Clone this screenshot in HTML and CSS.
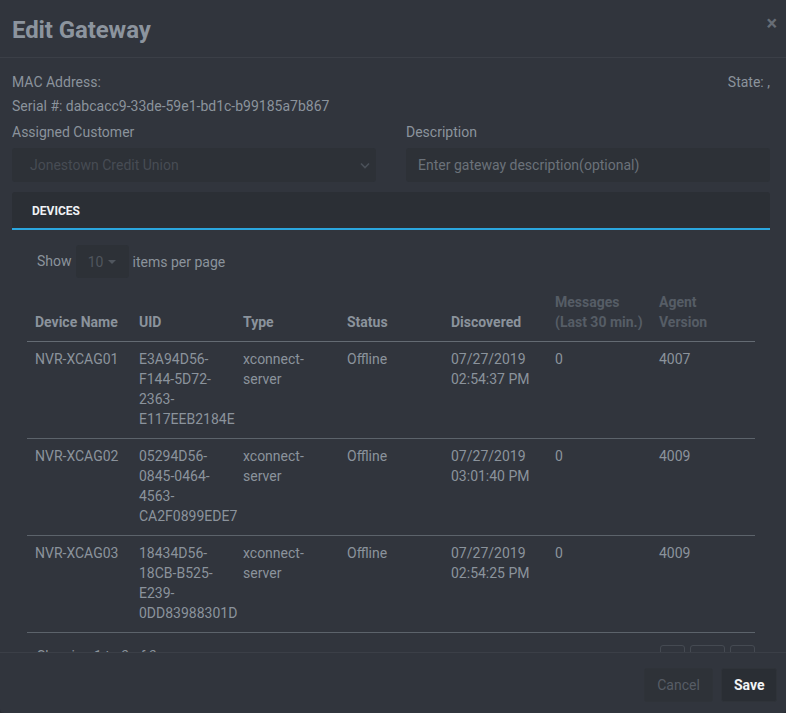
FILE: index.html
```html
<!DOCTYPE html>
<html>
<head>
<meta charset="utf-8">
<title>Edit Gateway</title>
<link rel="stylesheet" href="styles.css">
</head>
<body>
<div class="modal">
  <div class="modal-header">
    <h1 class="modal-title">Edit Gateway</h1>
    <span class="close">&times;</span>
  </div>
  <div class="modal-body">
    <div class="info-row">
      <span>MAC Address:</span>
      <span>State: ,</span>
    </div>
    <div class="info-line">Serial #: dabcacc9-33de-59e1-bd1c-b99185a7b867</div>
    <div class="fields">
      <div class="field">
        <label class="label">Assigned Customer</label>
        <div class="select disabled">
          <span>Jonestown Credit Union</span>
          <svg class="chev" width="10" height="7" viewBox="0 0 10 7"><path d="M1 1.5 L5 5.5 L9 1.5" fill="none" stroke="#4a5058" stroke-width="1.6"/></svg>
        </div>
      </div>
      <div class="field">
        <label class="label">Description</label>
        <div class="input"><span class="placeholder">Enter gateway description(optional)</span></div>
      </div>
    </div>
    <div class="tabs">
      <div class="tab active">DEVICES</div>
    </div>
    <div class="grid">
      <div class="pager-top">
        <span>Show</span>
        <div class="page-size"><span>10</span><span class="caret"></span></div>
        <span>items per page</span>
      </div>
      <table class="devices">
        <thead>
          <tr>
            <th>Device Name</th>
            <th>UID</th>
            <th>Type</th>
            <th>Status</th>
            <th>Discovered</th>
            <th class="dim">Messages (Last 30 min.)</th>
            <th class="dim">Agent Version</th>
          </tr>
        </thead>
        <tbody>
          <tr>
            <td>NVR-XCAG01</td>
            <td>E3A94D56-<br>F144-5D72-<br>2363-<br>E117EEB2184E</td>
            <td>xconnect-<br>server</td>
            <td>Offline</td>
            <td>07/27/2019<br>02:54:37 PM</td>
            <td>0</td>
            <td>4007</td>
          </tr>
          <tr>
            <td>NVR-XCAG02</td>
            <td>05294D56-<br>0845-0464-<br>4563-<br>CA2F0899EDE7</td>
            <td>xconnect-<br>server</td>
            <td>Offline</td>
            <td>07/27/2019<br>03:01:40 PM</td>
            <td>0</td>
            <td>4009</td>
          </tr>
          <tr>
            <td>NVR-XCAG03</td>
            <td>18434D56-<br>18CB-B525-<br>E239-<br>0DD83988301D</td>
            <td>xconnect-<br>server</td>
            <td>Offline</td>
            <td>07/27/2019<br>02:54:25 PM</td>
            <td>0</td>
            <td>4009</td>
          </tr>
        </tbody>
      </table>
      <div class="pager-bottom">
        <span class="showing">Showing 1 to 3 of 3</span>
        <div class="pages">
          <span class="pbtn">&lsaquo;</span>
          <span class="pbtn wide">1</span>
          <span class="pbtn">&rsaquo;</span>
        </div>
      </div>
    </div>
  </div>
  <div class="modal-footer">
    <button class="btn cancel">Cancel</button>
    <button class="btn save">Save</button>
  </div>
</div>
</body>
</html>
```
FILE: styles.css
```css
* { box-sizing: border-box; }
html, body {
  margin: 0;
  padding: 0;
  height: 100%;
  background: #2a2d33;
}
body {
  font-family: Roboto, "Liberation Sans", sans-serif;
  font-size: 14px;
  color: #8b939c;
}
.modal {
  width: 786px;
  height: 713px;
  background: #31353d;
  display: flex;
  flex-direction: column;
  border-radius: 0 0 4px 4px;
  overflow: hidden;
}
.modal-header {
  height: 58px;
  flex: none;
  border-bottom: 1px solid #3b3f47;
  display: flex;
  align-items: center;
  justify-content: space-between;
  padding: 0 9px 0 12px;
  position: relative;
}
.modal-title {
  margin: 0;
  font-size: 24px;
  font-weight: 700;
  color: #8c949e;
  letter-spacing: -0.1px;
  margin-top: 3px;
}
.close {
  font-size: 20px;
  font-weight: 700;
  color: #676d76;
  align-self: flex-start;
  margin-top: 11px;
  line-height: 24px;
}
.modal-body {
  flex: 1;
  overflow-y: auto;
  padding: 12px 14px 12px 12px;
  border-right: 2px solid transparent;
}
.modal-body::-webkit-scrollbar { width: 2px; }
.modal-body::-webkit-scrollbar-track { background: transparent; }
.modal-body::-webkit-scrollbar-thumb { background: #a3a8ae; }
.info-row {
  display: flex;
  justify-content: space-between;
  line-height: 24px;
}
.info-line { line-height: 24px; }
.fields {
  display: grid;
  grid-template-columns: 364px 364px;
  column-gap: 30px;
  margin-top: 4px;
}
.label {
  display: block;
  line-height: 20px;
  margin-bottom: 6px;
}
.select, .input {
  height: 34px;
  background: #2d3137;
  border-radius: 3px;
  display: flex;
  align-items: center;
  padding: 0 12px;
}
.select { padding-left: 18px; justify-content: space-between; padding-right: 6px; }
.select.disabled span { color: #474c54; }
.placeholder { color: #6b727a; }
.tabs {
  margin-top: 10px;
  background: #2b2f35;
  border-bottom: 2px solid #2ba6de;
  height: 38px;
  border-radius: 3px 3px 0 0;
  display: flex;
  align-items: center;
}
.tab {
  padding-left: 20px;
  font-size: 12px;
  font-weight: 700;
  color: #f0f2f4;
  margin-top: 1px;
}
.grid {
  padding: 15px 15px 0 15px;
}
.pager-top {
  display: flex;
  align-items: center;
  gap: 4px;
  padding-left: 10px;
  height: 33px;
  line-height: 20px;
}
.pager-top > span:first-child { margin-top: -1px; }
.page-size {
  height: 33px;
  width: 53px;
  background: #2d3137;
  border-radius: 3px;
  display: flex;
  align-items: center;
  justify-content: center;
  gap: 5px;
  color: #50565e;
}
.caret {
  width: 0;
  height: 0;
  border-left: 4px solid transparent;
  border-right: 4px solid transparent;
  border-top: 4px solid #50565e;
}
.devices {
  width: 728px;
  border-collapse: collapse;
  table-layout: fixed;
  margin-top: 6px;
}
.devices th, .devices td {
  width: 104px;
  text-align: left;
  vertical-align: top;
  padding: 8px 8px;
  line-height: 20px;
}
.devices th {
  vertical-align: bottom;
  font-weight: 700;
  color: #8b939c;
  border-bottom: 1px solid #646b73;
  padding-bottom: 9px;
}
.devices th.dim { color: #565d66; }
.devices td {
  border-bottom: 1px solid #5c636b;
  padding-bottom: 8px;
  padding-top: 7px;
}
.devices tbody tr td { padding-bottom: 9px; }
.pager-bottom {
  display: flex;
  justify-content: space-between;
  align-items: flex-start;
  padding: 12px 0 12px 10px;
}
.showing { margin-top: -1px; line-height: 24px; }
.pages { display: flex; gap: 5px; }
.pbtn {
  height: 28px;
  width: 25px;
  border: 1px solid #454a52;
  border-radius: 3px;
  display: flex;
  align-items: center;
  justify-content: center;
  color: #6b727a;
}
.pbtn.wide { width: 35px; }
.modal-footer {
  flex: none;
  height: 61px;
  border-top: 1px solid #3b3f47;
  display: flex;
  justify-content: flex-end;
  align-items: flex-start;
  gap: 8px;
  padding: 15px 9px 0 0;
}
.btn {
  font-family: Roboto, "Liberation Sans", sans-serif;
  font-size: 14px;
  height: 34px;
  border: 1px solid #2f3339;
  border-radius: 3px;
  padding: 0 12px;
}
.cancel {
  width: 69px;
  background: #2e3238;
  color: #575d66;
}
.save {
  width: 56px;
  background: #2a2e34;
  color: #f2f4f6;
  font-weight: 700;
}
```
